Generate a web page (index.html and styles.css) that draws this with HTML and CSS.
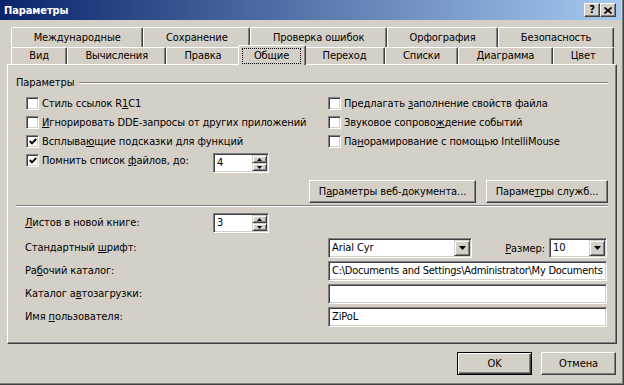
FILE: index.html
```html
<!DOCTYPE html>
<html lang="ru">
<head>
    <meta charset="UTF-8">
    <title>Параметры</title>
    <link rel="stylesheet" href="styles.css">
</head>
<body>
    <div class="window">
        <div class="titlebar">
            <span class="title">Параметры</span>
            <div class="caption-buttons">
                <span class="cap-btn help">?</span>
                <span class="cap-btn close">
                    <svg width="8" height="7" viewBox="0 0 8 7"><path d="M0.5 0.5 L7.5 6.5 M7.5 0.5 L0.5 6.5" stroke="#000" stroke-width="1.6" fill="none"/></svg>
                </span>
            </div>
        </div>

        <div class="tabs">
            <div class="tab-row back">
                <div class="tab">Международные</div>
                <div class="tab">Сохранение</div>
                <div class="tab">Проверка ошибок</div>
                <div class="tab">Орфография</div>
                <div class="tab">Безопасность</div>
            </div>
            <div class="tab-row front">
                <div class="tab">Вид</div>
                <div class="tab">Вычисления</div>
                <div class="tab">Правка</div>
                <div class="tab selected"><span class="focus">Общие</span></div>
                <div class="tab">Переход</div>
                <div class="tab">Списки</div>
                <div class="tab">Диаграмма</div>
                <div class="tab">Цвет</div>
            </div>
        </div>

        <div class="panel">
            <div class="group-head"><span>Параметры</span><i class="etch"></i></div>

            <div class="checks">
                <div class="check"><span class="box"></span><span>Стиль ссылок R<u>1</u>C1</span></div>
                <div class="check"><span class="box"></span><span>Предлагать <u>з</u>аполнение свойств файла</span></div>
                <div class="check"><span class="box"></span><span><u>И</u>гнорировать DDE-запросы от других приложений</span></div>
                <div class="check"><span class="box"></span><span>Звуковое сопрово<u>ж</u>дение событий</span></div>
                <div class="check"><span class="box checked"><svg width="8" height="7" viewBox="0 0 8 7"><polyline points="0.8,3 3,5.3 7.2,1" stroke="#000" stroke-width="1.9" fill="none"/></svg></span><span>Всплыва<u>ю</u>щие подсказки для функций</span></div>
                <div class="check"><span class="box"></span><span>Па<u>н</u>орамирование с помощью IntelliMouse</span></div>
                <div class="check"><span class="box checked"><svg width="8" height="7" viewBox="0 0 8 7"><polyline points="0.8,3 3,5.3 7.2,1" stroke="#000" stroke-width="1.9" fill="none"/></svg></span><span class="recent-label">Помнить список <u>ф</u>айлов, до:</span>
                    <div class="spin recent-spin">
                        <span class="spin-value">4</span>
                        <span class="spin-arrows">
                            <span class="arrow"><svg width="5" height="3" viewBox="0 0 5 3"><polygon points="2.5,0 5,3 0,3" fill="#000"/></svg></span>
                            <span class="arrow"><svg width="5" height="3" viewBox="0 0 5 3"><polygon points="0,0 5,0 2.5,3" fill="#000"/></svg></span>
                        </span>
                    </div>
                </div>
            </div>

            <div class="button-row">
                <span class="btn btn-web">П<u>а</u>раметры веб-документа...</span>
                <span class="btn btn-serv">Параме<u>т</u>ры служб...</span>
            </div>

            <div class="separator"></div>

            <div class="fields">
                <span class="field-label"><u>Л</u>истов в новой книге:</span>
                <div class="spin sheets-spin">
                    <span class="spin-value">3</span>
                    <span class="spin-arrows">
                        <span class="arrow"><svg width="5" height="3" viewBox="0 0 5 3"><polygon points="2.5,0 5,3 0,3" fill="#000"/></svg></span>
                        <span class="arrow"><svg width="5" height="3" viewBox="0 0 5 3"><polygon points="0,0 5,0 2.5,3" fill="#000"/></svg></span>
                    </span>
                </div>

                <span class="field-label wide">Стандартный <u>ш</u>рифт:</span>
                <div class="font-row">
                    <div class="combo font-combo">
                        <span class="combo-text">Arial Cyr</span>
                        <span class="drop"><svg width="7" height="4" viewBox="0 0 7 4"><polygon points="0,0 7,0 3.5,4" fill="#000"/></svg></span>
                    </div>
                    <span class="size-label"><u>Р</u>азмер:</span>
                    <div class="combo size-combo">
                        <span class="combo-text">10</span>
                        <span class="drop"><svg width="7" height="4" viewBox="0 0 7 4"><polygon points="0,0 7,0 3.5,4" fill="#000"/></svg></span>
                    </div>
                </div>

                <span class="field-label wide">Ра<u>б</u>очий каталог:</span>
                <div class="edit path">C:\Documents and Settings\Administrator\My Documents</div>

                <span class="field-label wide">Каталог а<u>в</u>тозагрузки:</span>
                <div class="edit"></div>

                <span class="field-label wide">Имя <u>п</u>ользователя:</span>
                <div class="edit">ZiPoL</div>
            </div>
        </div>

        <div class="footer">
            <span class="btn btn-dlg default">OK</span>
            <span class="btn btn-dlg">Отмена</span>
        </div>
    </div>
</body>
</html>
```

FILE: styles.css
```css
body {
    margin: 0;
    font-family: "DejaVu Sans Condensed", "Liberation Sans", Tahoma, sans-serif;
    font-size: 11px;
    letter-spacing: -0.1px;
    color: #000;
    background: #d4d0c8;
}

u {
    text-decoration-thickness: 1px;
    text-underline-offset: 1px;
}

.window {
    display: flex;
    flex-direction: column;
    width: 624px;
    height: 385px;
    box-sizing: border-box;
    padding: 0 2px 0 0;
    background: #d4d0c8;
    border-right: 1px solid #404040;
    border-bottom: 1px solid #404040;
    box-shadow: inset -1px -1px #808080;
}

/* caption */
.titlebar {
    display: flex;
    align-items: center;
    justify-content: space-between;
    height: 20px;
    padding: 0 5px 0 4px;
    background: linear-gradient(to right, #0a246a, #a6caf0);
    color: #fff;
    font-weight: bold;
}

.caption-buttons {
    display: flex;
}

.cap-btn {
    display: flex;
    align-items: center;
    justify-content: center;
    width: 16px;
    height: 14px;
    box-sizing: border-box;
    background: #d4d0c8;
    border: 1px solid;
    border-color: #fff #404040 #404040 #fff;
    box-shadow: inset -1px -1px #808080;
    color: #000;
    font-size: 11px;
    line-height: 12px;
}

/* tabs */
.tabs {
    margin-top: 7px;
    padding: 0 7px 0 11px;
}

.tab-row {
    display: flex;
}

.tab {
    flex: 1 1 auto;
    padding: 0 6px;
    text-align: center;
    background: #d4d0c8;
    border-top: 1px solid #fff;
    border-left: 1px solid #fff;
    border-right: 1px solid #404040;
    box-shadow: inset -1px 0 #808080;
    border-radius: 2px 2px 0 0;
    white-space: nowrap;
}

.back .tab {
    height: 20px;
    line-height: 19px;
    box-sizing: border-box;
}

.front .tab {
    height: 17px;
    line-height: 16px;
    box-sizing: border-box;
}

.front .tab.selected {
    position: relative;
    z-index: 1;
    display: flex;
    height: 20px;
    margin: -2px -2px -1px;
    padding: 2px 4px 1px 3px;
}

.focus {
    flex: 1;
    border: 1px dotted #000;
    line-height: 13px;
}

/* page */
.panel {
    display: flex;
    flex-direction: column;
    height: 280px;
    box-sizing: border-box;
    margin: 0 4px 0 7px;
    padding: 12px 8px 0 8px;
    border: 1px solid;
    border-color: #fff #404040 #404040 #fff;
    box-shadow: inset -1px -1px #808080;
}

.group-head {
    display: flex;
    align-items: center;
    height: 12px;
    line-height: 12px;
}

.etch {
    flex: 1;
    margin-left: 5px;
    border-top: 1px solid #808080;
    border-bottom: 1px solid #fff;
}

.checks {
    display: grid;
    grid-template-columns: 302px 1fr;
    grid-auto-rows: 19px;
    margin-top: 5px;
    padding-left: 10px;
}

.check {
    display: flex;
    align-items: flex-start;
    gap: 3px;
    line-height: 19px;
    white-space: nowrap;
}

.box {
    display: flex;
    align-items: center;
    justify-content: center;
    width: 13px;
    height: 13px;
    box-sizing: border-box;
    margin-top: 3px;
    flex: none;
    background: #fff;
    border: 1px solid;
    border-color: #808080 #fff #fff #808080;
    box-shadow: inset 1px 1px #404040, inset -1px -1px #d4d0c8;
}

.recent-label {
    width: 171px;
}

.spin {
    display: flex;
    width: 56px;
    height: 20px;
    box-sizing: border-box;
    background: #fff;
    border: 1px solid;
    border-color: #808080 #fff #fff #808080;
    box-shadow: inset 1px 1px #404040, inset -1px -1px #d4d0c8;
}

.recent-spin {
    margin-top: 2px;
    margin-left: -3px;
}

.spin-value {
    flex: 1;
    padding-left: 3px;
    line-height: 18px;
}

.spin-arrows {
    display: flex;
    flex-direction: column;
    width: 15px;
    margin: 1px;
}

.arrow {
    display: flex;
    align-items: center;
    justify-content: center;
    height: 8px;
    box-sizing: border-box;
    background: #d4d0c8;
    border: 1px solid;
    border-color: #d4d0c8 #404040 #404040 #d4d0c8;
    box-shadow: inset 1px 1px #fff, inset -1px -1px #808080;
}

.button-row {
    display: flex;
    justify-content: flex-end;
    gap: 10px;
    margin-top: 10px;
}

.btn {
    display: flex;
    align-items: center;
    justify-content: center;
    height: 23px;
    box-sizing: border-box;
    background: #d4d0c8;
    border: 1px solid;
    border-color: #fff #404040 #404040 #fff;
    box-shadow: inset -1px -1px #808080;
    white-space: nowrap;
}

.btn-web {
    width: 167px;
}

.btn-serv {
    width: 122px;
}

.separator {
    margin-top: 2px;
    border-top: 1px solid #808080;
    border-bottom: 1px solid #fff;
}

.fields {
    display: grid;
    grid-template-columns: 188px 115px 279px;
    grid-template-rows: 22px repeat(4, 20px);
    row-gap: 3px;
    margin-top: 6px;
    padding-left: 9px;
}

.field-label {
    line-height: 20px;
    white-space: nowrap;
}

.field-label.wide {
    grid-column: 1 / 3;
}

.font-row {
    display: flex;
    align-items: center;
}

.combo,
.edit {
    display: flex;
    height: 20px;
    box-sizing: border-box;
    background: #fff;
    border: 1px solid;
    border-color: #808080 #fff #fff #808080;
    box-shadow: inset 1px 1px #404040, inset -1px -1px #d4d0c8;
    overflow: hidden;
}

.edit {
    padding: 0 3px;
    line-height: 18px;
    white-space: nowrap;
}

.edit.path {
    padding-right: 0;
    letter-spacing: -0.25px;
}

.font-combo {
    width: 144px;
}

.size-combo {
    width: 58px;
}

.size-label {
    margin-left: auto;
    margin-right: 4px;
}

.combo-text {
    flex: 1;
    padding-left: 3px;
    line-height: 18px;
}

.drop {
    display: flex;
    align-items: center;
    justify-content: center;
    width: 16px;
    height: 16px;
    box-sizing: border-box;
    margin: 1px;
    background: #d4d0c8;
    border: 1px solid;
    border-color: #d4d0c8 #404040 #404040 #d4d0c8;
    box-shadow: inset 1px 1px #fff, inset -1px -1px #808080;
}

/* dialog buttons */
.footer {
    display: flex;
    justify-content: flex-end;
    gap: 9px;
    margin-top: 8px;
    padding-right: 5px;
}

.btn-dlg {
    width: 75px;
}

.btn.default {
    border-color: #000;
    box-shadow: inset 1px 1px #fff, inset -1px -1px #404040, inset -2px -2px #808080;
}
```
